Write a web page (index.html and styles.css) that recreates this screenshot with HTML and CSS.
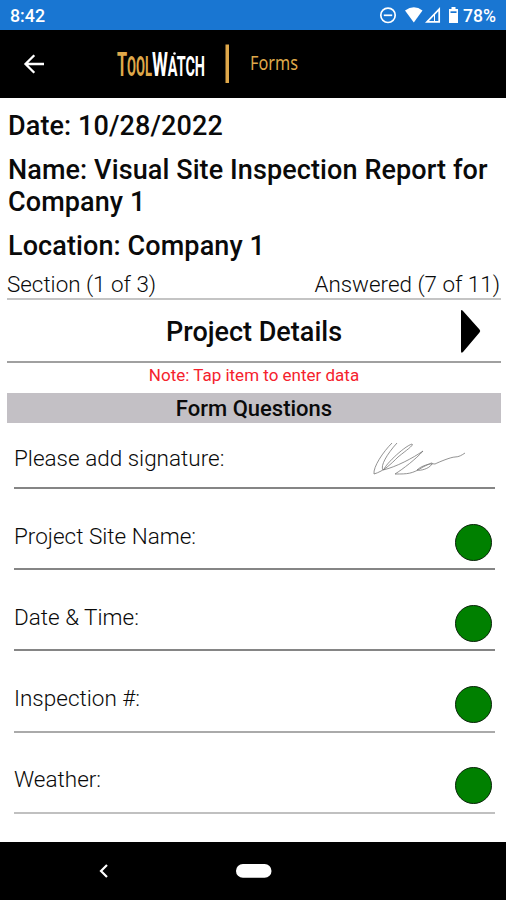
FILE: index.html
```html
<!DOCTYPE html>
<html lang="en">
<head>
  <meta charset="utf-8">
  <title>ToolWatch Forms</title>
  <link rel="stylesheet" href="styles.css">
</head>
<body>
  <div class="status-bar">
    <svg class="status-text" width="506" height="30">
      <text x="10" y="22" textLength="35" lengthAdjust="spacingAndGlyphs">8:42</text>
      <g fill="none" stroke="#fff" stroke-width="1.7">
        <circle cx="388" cy="15.3" r="7.2"/>
        <path d="M383.8 15.3h8.4"/>
        <path d="M427 21.8h12.2V9.2z"/>
      </g>
      <path d="M405 10.4q9-6.4 17.5 0L413.8 22.5z" fill="#fff"/>
      <path d="M434.5 14v8" stroke="#fff" stroke-width="1"/>
      <path d="M449 9h2.500V7h4v2h2.500v14h-9z" fill="#fff"/>
      <path d="M450.500 11.300h6v1.700h-6z" fill="#1976d2"/>
      <text x="463" y="22" textLength="33" lengthAdjust="spacingAndGlyphs">78%</text>
    </svg>
  </div>

  <div class="header">
    <svg width="506" height="68">
      <path d="M44 34H26M34.3 25.2L25.5 34l8.8 8.8" fill="none" stroke="#fff" stroke-width="2.3"/>
      <!-- logo -->
      <g class="logo">
        <text class="gold" x="117" y="46" textLength="35" lengthAdjust="spacingAndGlyphs">T<tspan class="small">OOL</tspan></text>
        <text class="white" x="152" y="46" textLength="53" lengthAdjust="spacingAndGlyphs">W<tspan class="small">ATCH</tspan></text>
      </g>
      <circle cx="174.5" cy="23.5" r="1.3" fill="#fff"/>
      <rect x="225.5" y="14.5" width="3.5" height="38.5" fill="#dfa84a"/>
      <text class="forms" x="250" y="40" textLength="48" lengthAdjust="spacingAndGlyphs">Forms</text>
    </svg>
  </div>

  <div class="content">
    <div class="info">
      <div>Date: 10/28/2022</div>
      <div>Name: Visual Site Inspection Report for Company 1</div>
      <div>Location: Company 1</div>
    </div>
    <div class="progress">
      <span>Section (1 of 3)</span>
      <span>Answered (7 of 11)</span>
    </div>
    <div class="section">
      <span>Project Details</span>
      <svg class="next" width="24" height="46"><path d="M2 2.500Q2 0 4 2L20.500 20.500q1.500 1.500 0 3L4 43q-2 2-2-1z"/></svg>
    </div>
    <div class="note">Note: Tap item to enter data</div>
    <div class="bar">Form Questions</div>

    <div class="row signature">
      <span>Please add signature:</span>
      <svg width="120" height="40">
        <path d="M32 3C23 12 13 27 14 34c10-3 17-10 24-17 10-8 16-12 14-13C43 7 23 27 24 30M37 3C27 14 20 26 23 30c13-3 30-12 40-19-7 8-20 18-28 23 13 0 17 0 28-7 8-4 10-5 9-3-3 5-12 7-15 6 4-4 13-7 18-6 4-2 16-7 20-7s7-2 10-4"/>
      </svg>
    </div>
    <div class="row"><span>Project Site Name:</span><i class="dot"></i></div>
    <div class="row"><span>Date &amp; Time:</span><i class="dot"></i></div>
    <div class="row light"><span>Inspection #:</span><i class="dot"></i></div>
    <div class="row lighter"><span>Weather:</span><i class="dot"></i></div>
  </div>

  <div class="nav-bar">
    <svg width="506" height="58">
      <path d="M107 23l-6 6 6 6" fill="none" stroke="#fff" stroke-width="2.2"/>
      <rect x="236" y="22" width="35.5" height="13.8" rx="6.9" fill="#fff"/>
    </svg>
  </div>
</body>
</html>
```
FILE: styles.css
```css
* {
  box-sizing: border-box;
}

body {
  margin: 0;
  width: 506px;
  height: 900px;
  display: flex;
  flex-direction: column;
  overflow: hidden;
  background: #fff;
  color: #0a0a0a;
  font-family: Roboto, "Liberation Sans", sans-serif;
}

svg {
  display: block;
}

.status-bar {
  height: 30px;
  background: #1976d2;
}

.status-text text {
  fill: #fff;
  font-size: 18px;
  font-weight: 500;
}

.header {
  height: 68px;
  background: #000;
}

.logo {
  font-size: 34px;
  font-weight: 700;
}

.small {
  font-size: 27px;
}

.gold,
.forms {
  fill: #dfa84a;
}

.white {
  fill: #fff;
}

.forms {
  font-family: "Noto Sans", sans-serif;
  font-size: 19px;
}

.content {
  flex: 1;
  padding: 12px 5px 0 7px;
}

.info {
  display: flex;
  flex-direction: column;
  gap: 12px;
  padding-left: 1px;
  font-size: 27px;
  line-height: 32px;
  font-weight: 500;
  letter-spacing: 0.1px;
}

.progress {
  display: flex;
  justify-content: space-between;
  height: 38px;
  padding: 10px 1px 0 0;
  border-bottom: 2px solid #c4c4c4;
  font-size: 22.4px;
  font-weight: 300;
  line-height: 24px;
}

.section {
  display: flex;
  align-items: center;
  justify-content: center;
  position: relative;
  height: 62.5px;
  padding-top: 3px;
  border-bottom: 2px solid #a0a0a0;
  font-size: 27px;
  font-weight: 500;
}

.next {
  position: absolute;
  right: 18px;
  top: 9px;
}

.note {
  height: 30.5px;
  line-height: 25px;
  text-align: center;
  color: #f5222d;
  font-size: 17px;
}

.bar {
  height: 30px;
  line-height: 32px;
  background: #c3c0c5;
  text-align: center;
  font-size: 22px;
  font-weight: 500;
}

.row {
  display: flex;
  justify-content: space-between;
  height: 81.2px;
  margin: 0 6px 0 7px;
  padding: 34.5px 3px 0 0;
  border-bottom: 2px solid #858585;
  font-size: 22.5px;
  line-height: 24px;
  font-weight: 300;
}

.signature {
  height: 66px;
  padding-top: 23px;
  padding-right: 15px;
}

.signature svg {
  margin-top: -6px;
  fill: none;
  stroke: #777;
  stroke-width: 0.8;
}

.light {
  border-color: #aaa;
}

.lighter {
  border-color: #c0c0c0;
}

.dot {
  width: 37px;
  height: 37px;
  border: 1px solid #0a250a;
  border-radius: 50%;
  background: #008000;
}

.nav-bar {
  height: 58px;
  background: #000;
}
```
